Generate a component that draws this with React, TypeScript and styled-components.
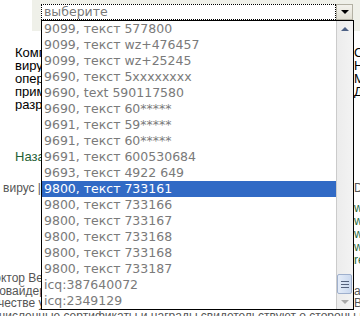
import React from 'react'
import styled, { createGlobalStyle } from 'styled-components'

const GlobalStyle = createGlobalStyle`
  html, body {
    margin: 0;
    padding: 0;
    background: #fff;
  }
  body {
    width: 360px;
    height: 316px;
    overflow: hidden;
  }
`

const options = [
  '9099, текст 577800',
  '9099, текст wz+476457',
  '9099, текст wz+25245',
  '9690, текст 5xxxxxxxx',
  '9690, text 590117580',
  '9690, текст 60*****',
  '9691, текст 59*****',
  '9691, текст 60*****',
  '9691, текст 600530684',
  '9693, текст 4922 649',
  '9800, текст 733161',
  '9800, текст 733166',
  '9800, текст 733167',
  '9800, текст 733168',
  '9800, текст 733168',
  '9800, текст 733187',
  'icq:387640072',
  'icq:2349129',
]
const SELECTED = 10

const intro = [
  ['Компания «Доктор Веб» — российский разработчик средств защиты', 'Обновления'],
  ['вирусные базы и модули обновляются несколько раз в сутки для всех', 'Новости'],
  ['операционных систем, на которых работают наши продукты и', 'Мобильная'],
  ['применяются технологии эвристического анализа, разработанные', 'Документация'],
  ['разработчиками компании', ''],
]

const links = ['www.drweb.com', 'www.drweb.ru', 'www.freedrweb.com', 'www.drweb.net', 'reseller']

const Page = styled.div`
  position: relative;
  width: 360px;
  height: 316px;
  overflow: hidden;
  font-family: "Liberation Sans", Arial, sans-serif;
`

const TopPanel = styled.div`
  margin-left: 32px;
  height: 31px;
  background: #eff0e9;
`

const Block = styled.div<{ $gap: number; $lh: number; $size: number; $color: string }>`
  margin-top: ${p => p.$gap}px;
  line-height: ${p => p.$lh}px;
  font-size: ${p => p.$size}px;
  color: ${p => p.$color};
`

const Line = styled.div`
  display: grid;
  grid-template-columns: 354px 1fr;
  white-space: nowrap;
`

const Cell = styled.div<{ $pad?: number; $shift?: number }>`
  overflow: hidden;
  padding-left: ${p => p.$pad ?? 0}px;

  span {
    display: inline-block;
    margin-left: ${p => p.$shift ?? 0}px;
  }
`

const NavCell = styled.div`
  width: 41px;
  overflow: hidden;
  display: flex;
  justify-content: flex-end;
`

const FullLine = styled.div<{ $shift: number }>`
  white-space: nowrap;
  margin-left: ${p => p.$shift}px;
`

const Dropdown = styled.div`
  position: absolute;
  left: 41px;
  top: 4px;
  width: 312px;
  font-family: "DejaVu Sans", Verdana, sans-serif;
  font-size: 12.5px;
  color: #7a7a7a;
`

const SelectBox = styled.div`
  display: flex;
  height: 16px;
  background: #fff;
`

const Field = styled.div`
  flex: 1;
  box-sizing: border-box;
  height: 16px;
  border: 1px dotted #000;
  line-height: 14px;
  padding-left: 2px;
  white-space: nowrap;
`

const ArrowButton = styled.div`
  width: 17px;
  height: 16px;
  box-sizing: border-box;
  border: 1px solid #b3b1a4;
  background: linear-gradient(#f3f2ec, #e2e0d4);
  display: flex;
  align-items: center;
  justify-content: center;
`

const Triangle = styled.span<{ $dir: 'up' | 'down'; $color: string }>`
  width: 0;
  height: 0;
  border-left: 4px solid transparent;
  border-right: 4px solid transparent;
  ${p => (p.$dir === 'down' ? 'border-top' : 'border-bottom')}: 4px solid ${p => p.$color};
`

const ListBox = styled.div`
  position: absolute;
  top: 16px;
  left: 0;
  width: 313px;
  height: 290px;
  box-sizing: border-box;
  border: 1px solid #000;
  background: #fff;
  display: flex;
`

const Options = styled.div`
  flex: 1;
  min-width: 0;
`

const Option = styled.div<{ $selected: boolean }>`
  height: 16px;
  line-height: 16px;
  padding-left: 2px;
  white-space: nowrap;
  overflow: hidden;
  background: ${p => (p.$selected ? '#316ac5' : 'transparent')};
  color: ${p => (p.$selected ? '#fff' : 'inherit')};
`

const Scrollbar = styled.div`
  width: 17px;
  box-sizing: border-box;
  border-left: 1px solid #cbcbcb;
  background: linear-gradient(90deg, #ececec, #f3f3f3);
  display: flex;
  flex-direction: column;
`

const ScrollButton = styled.div<{ $h: number }>`
  height: ${p => p.$h}px;
  display: flex;
  align-items: center;
  justify-content: center;
`

const Track = styled.div`
  flex: 1;
  display: flex;
  flex-direction: column;
  justify-content: flex-end;
`

const Thumb = styled.div`
  height: 20px;
  margin: 0 1px 0 0;
  box-sizing: border-box;
  border: 1px solid #9fb0cd;
  border-radius: 2px;
  background: linear-gradient(90deg, #e4ecf8, #cbd9ef);
  display: flex;
  flex-direction: column;
  align-items: center;
  justify-content: center;
  gap: 2px;
`

const Grip = styled.span`
  width: 8px;
  height: 1px;
  background: #55627c;
`

export default function App() {
  return (
    <Page>
      <GlobalStyle />
      <TopPanel />

      <Block $gap={15} $lh={13} $size={13} $color="#000">
        {intro.map(([left, right], i) => (
          <Line key={i}>
            <Cell $pad={15}>{left}</Cell>
            <Cell>{right}</Cell>
          </Line>
        ))}
      </Block>

      <Block $gap={39} $lh={13} $size={13} $color="#1f5f36">
        <Line>
          <Cell $pad={15}>Назад</Cell>
          <Cell />
        </Line>
      </Block>

      <Block $gap={19} $lh={13} $size={12} $color="#555">
        <Line>
          <NavCell>Удалить вирус |</NavCell>
          <Cell>Dr.Web</Cell>
        </Line>
      </Block>

      <Block $gap={7} $lh={13} $size={12} $color="#2b6b3d">
        {links.map(l => (
          <Line key={l}>
            <Cell />
            <Cell>{l}</Cell>
          </Line>
        ))}
      </Block>

      <Block $gap={5} $lh={12.6} $size={12} $color="#555">
        <Line>
          <Cell $shift={-14}><span>Доктор Веб — партнёр</span></Cell>
          <Cell />
        </Line>
        <Line>
          <Cell $shift={-14}><span>провайдерами и дистрибьюторами</span></Cell>
          <Cell>антивирус</Cell>
        </Line>
        <Line>
          <Cell $shift={-14}><span>качестве услуги</span></Cell>
          <Cell>Вебинары</Cell>
        </Line>
        <FullLine $shift={-33}>многочисленные сертификаты и награды свидетельствуют о стороны искусства</FullLine>
      </Block>

      <Dropdown>
        <SelectBox>
          <Field>выберите</Field>
          <ArrowButton>
            <Triangle $dir="down" $color="#000" />
          </ArrowButton>
        </SelectBox>
        <ListBox>
          <Options>
            {options.map((o, i) => (
              <Option key={i} $selected={i === SELECTED}>{o}</Option>
            ))}
          </Options>
          <Scrollbar>
            <ScrollButton $h={16}>
              <Triangle $dir="up" $color="#4d6185" />
            </ScrollButton>
            <Track>
              <Thumb>
                <Grip />
                <Grip />
                <Grip />
              </Thumb>
            </Track>
            <ScrollButton $h={15}>
              <Triangle $dir="down" $color="#a8a8a8" />
            </ScrollButton>
          </Scrollbar>
        </ListBox>
      </Dropdown>
    </Page>
  )
}
